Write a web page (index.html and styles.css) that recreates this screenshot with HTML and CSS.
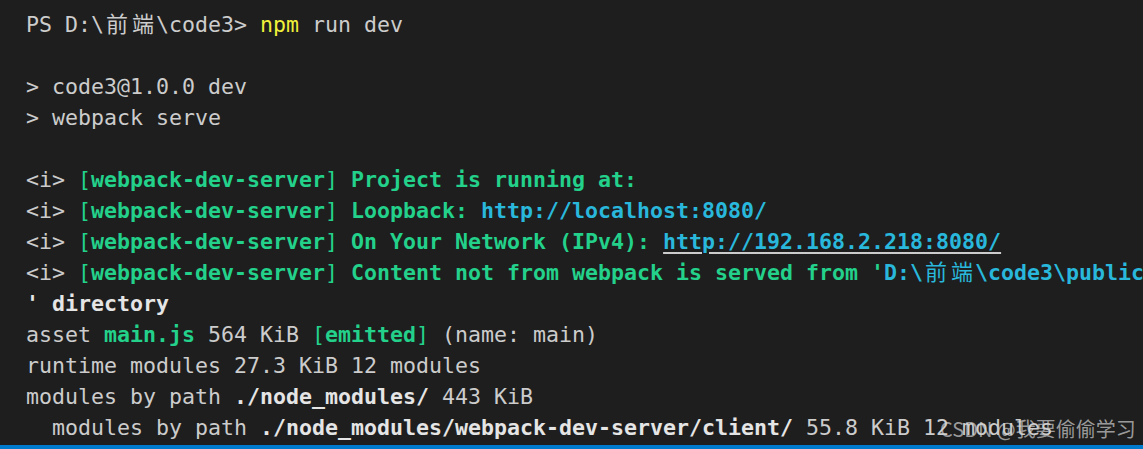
FILE: index.html
```html
<!DOCTYPE html>
<html>

<head>
    <link rel="stylesheet" href="styles.css">
    <title>Terminal</title>
</head>

<body>
    <div class="page">
        <div class="terminal">
            <div class="line">PS D:\<span class="cjk">前</span><span class="cjk">端</span>\code3&gt; <span class="cmd">npm</span> run dev</div>
            <div class="line"> </div>
            <div class="line">&gt; code3@1.0.0 dev</div>
            <div class="line">&gt; webpack serve</div>
            <div class="line"> </div>
            <div class="line">&lt;i&gt; <span class="green">[<b>webpack-dev-server</b>] <b>Project is running at:</b></span></div>
            <div class="line">&lt;i&gt; <span class="green">[<b>webpack-dev-server</b>] <b>Loopback: </b></span><b class="cyan">http://localhost:8080/</b></div>
            <div class="line">&lt;i&gt; <span class="green">[<b>webpack-dev-server</b>] <b>On Your Network (IPv4): </b></span><b class="cyan link">http://192.168.2.218:8080/</b></div>
            <div class="line">&lt;i&gt; <span class="green">[<b>webpack-dev-server</b>] <b>Content not from webpack is served from '</b></span><b class="cyan">D:\<span class="cjk">前</span><span class="cjk">端</span>\code3\public</b></div>
            <div class="line"><b class="white">' directory</b></div>
            <div class="line">asset <b class="green">main.js</b> 564 KiB <span class="green">[<b>emitted</b>]</span> (name: main)</div>
            <div class="line">runtime modules 27.3 KiB 12 modules</div>
            <div class="line">modules by path <b class="white">./node_modules/</b> 443 KiB</div>
            <div class="line">  modules by path <b class="white">./node_modules/webpack-dev-server/client/</b> 55.8 KiB 12 modules</div>
        </div>
        <div class="statusbar"></div>
        <div class="watermark">CSDN @我要偷偷学习</div>
    </div>
</body>

</html>
```

FILE: styles.css
```css
html, body {
    margin: 0;
    height: 100%;
    background: #1e1e1e;
}

.page {
    position: relative;
    display: flex;
    flex-direction: column;
    height: 449px;
    overflow: hidden;
}

.terminal {
    flex: 1;
    overflow: hidden;
    padding: 9px 0 0 26px;
    font-family: "DejaVu Sans Mono", "Liberation Mono", monospace;
    font-size: 21.6px;
    line-height: 31px;
    color: #cccccc;
}

.line {
    white-space: pre;
    height: 31px;
}

.line b {
    font-weight: bold;
}

.cjk {
    display: inline-block;
    width: 26px;
    text-align: center;
    font-family: "Noto Sans CJK SC", sans-serif;
    font-size: 22px;
    font-weight: normal;
    line-height: 1;
}

.cmd {
    color: #f0f03a;
}

.green {
    color: #23d18b;
}

.cyan {
    color: #29b8db;
}

.white {
    color: #e5e5e5;
}

.link {
    text-decoration: underline;
    text-decoration-color: #cccccc;
    text-decoration-thickness: 2px;
    text-underline-offset: 3px;
}

.statusbar {
    height: 4px;
    background: #007acc;
}

.watermark {
    position: absolute;
    left: 940px;
    top: 419px;
    font-family: "Noto Sans CJK SC", sans-serif;
    font-size: 20px;
    line-height: 20px;
    color: rgba(210, 210, 210, 0.7);
    white-space: nowrap;
}
```
